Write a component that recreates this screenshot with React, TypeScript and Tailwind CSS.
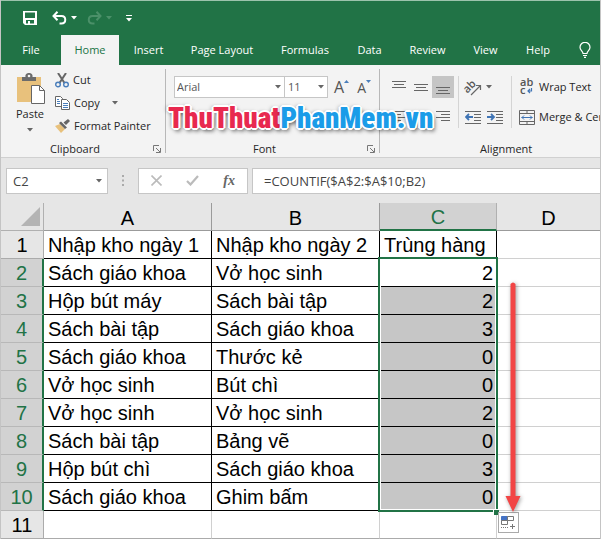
import type { ReactNode } from "react";
import clsx from "clsx";

const tabs = [
  { name: "File", className: "w-[60px]" },
  { name: "Home", className: "w-[58px] bg-[#f3f3f3] text-[#217346]" },
  { name: "Insert", className: "w-[59px]" },
  { name: "Page Layout", className: "w-[88px]" },
  { name: "Formulas", className: "w-[78px]" },
  { name: "Data", className: "w-[51px]" },
  { name: "Review", className: "w-[65px]" },
  { name: "View", className: "w-[51px]" },
  { name: "Help", className: "w-[54px]" },
];

const rows = [
  ["Nhập kho ngày 1", "Nhập kho ngày 2", "Trùng hàng"],
  ["Sách giáo khoa", "Vở học sinh", "2"],
  ["Hộp bút máy", "Sách bài tập", "2"],
  ["Sách bài tập", "Sách giáo khoa", "3"],
  ["Sách giáo khoa", "Thước kẻ", "0"],
  ["Vở học sinh", "Bút chì", "0"],
  ["Vở học sinh", "Vở học sinh", "2"],
  ["Sách bài tập", "Bảng vẽ", "0"],
  ["Hộp bút chì", "Sách giáo khoa", "3"],
  ["Sách giáo khoa", "Ghim bấm", "0"],
  ["", "", ""],
];

const Caret = ({ className = "text-[#666]" }: { className?: string }) => (
  <svg width="6" height="4" viewBox="0 0 6 4" className={clsx("shrink-0", className)}>
    <path d="M0 0h6L3 3.5z" fill="currentColor" />
  </svg>
);

const Launcher = () => (
  <button aria-label="More options" className="absolute right-1 bottom-0">
    <svg width="8" height="8" viewBox="0 0 8 8" fill="none" stroke="#777">
      <path d="M.5 6V.5H6M3 3l4 4M7.5 3v4.5H3" />
    </svg>
  </button>
);

// horizontal rules used by all the alignment icons: [x1, x2, y]
const Lines = ({ lines, children }: { lines: number[][]; children?: ReactNode }) => (
  <svg width="16" height="14" viewBox="0 0 16 14" stroke="#666" fill="none">
    {lines.map(([a, b, y]) => (
      <path key={y} d={`M${a} ${y + 0.5}H${b}`} />
    ))}
    {children}
  </svg>
);

const TitleBar = () => (
  <div className="flex h-[34px] items-center pl-[22px] text-white">
    <button aria-label="Save">
      <svg width="15" height="14" viewBox="0 0 15 14">
        <path
          fill="#fff"
          fillRule="evenodd"
          d="M0 0h14v14H2L0 12zM2 1.5V7h10V1.5zM3 9v3.5h2V10h2v2.5h4V9z"
        />
      </svg>
    </button>
    <button aria-label="Undo" className="ml-[14px]">
      <svg width="15" height="14" viewBox="0 0 15 14" fill="none" stroke="#fff" strokeWidth="2">
        <path d="M5.500.8 1.500 5l4 4.200M2 5h7.500c5 0 5 7.500 0 7.500H7.500" />
      </svg>
    </button>
    <Caret className="ml-1 text-white" />
    <button aria-label="Redo" className="ml-[10px]">
      <svg width="15" height="14" viewBox="0 0 15 14" fill="none" stroke="#4b9069" strokeWidth="2">
        <path d="m9.500.8 4 4.200-4 4.200M13 5H5.500c-5 0-5 7.500 0 7.500h2" />
      </svg>
    </button>
    <Caret className="ml-1 text-[#4b9069]" />
    <button aria-label="Customize toolbar" className="ml-[14px]">
      <svg width="6" height="7" viewBox="0 0 6 7" fill="#fff">
        <path d="M0 0h6v1H0zM0 3h6L3 6.500z" />
      </svg>
    </button>
  </div>
);

const Tabs = () => (
  <nav className="flex h-[30px] text-[11px] text-white">
    {tabs.map((tab) => (
      <button
        key={tab.name}
        className={clsx("shrink-0 whitespace-nowrap", tab.className)}
      >
        {tab.name}
      </button>
    ))}
    <button aria-label="Tell me" className="ml-[14px] shrink-0">
      <svg width="12" height="16" viewBox="0 0 12 16" fill="none" stroke="#fff" strokeWidth="1.200">
        <path d="M4 11.500c0-2.500-3-3-3-6.200a5 5 0 0 1 10 0c0 3.200-3 3.700-3 6.200zM4 13.500h4M5 15.300h2" />
      </svg>
    </button>
  </nav>
);

const Clipboard = () => (
  <section className="relative my-1 w-[165px] shrink-0 border-r border-[#b8b8b8]">
    <div className="flex">
      <button className="ml-3 flex w-[34px] flex-col items-center pt-1">
        <svg width="30" height="32" viewBox="0 0 30 32">
          <path d="M2 4h24v25H2z" fill="#e8c17c" />
          <path
            d="M7 8V4h3.500C10 1 12 0 14 0s4 1 3.500 4H21v4z"
            fill="#6b6b6b"
          />
          <circle cx="14" cy="3" r="1.300" fill="#f3f3f3" />
          <path d="M16.500 12.500h8l5 5v13h-13z" fill="#fff" stroke="#666" />
          <path d="M24.500 12.500v5h5" fill="none" stroke="#666" />
        </svg>
        <span className="mt-px leading-4">Paste</span>
        <Caret className="mt-[6px] text-[#666]" />
      </button>
      <div className="ml-2 flex flex-col">
        <button className="flex h-[22px] items-center gap-1">
          <svg width="14" height="15" viewBox="0 0 14 15" fill="none">
            <path d="m3 0 6.500 10M11 0 4.500 10" stroke="#666" strokeWidth="2" />
            <circle cx="3" cy="11.500" r="2.300" stroke="#4a7ebb" strokeWidth="1.400" />
            <circle cx="11" cy="11.500" r="2.300" stroke="#4a7ebb" strokeWidth="1.400" />
          </svg>
          Cut
        </button>
        <button className="flex h-[24px] items-center gap-1">
          <svg width="15" height="14" viewBox="0 0 15 14" fill="#fff" stroke="#666">
            <path d="M.5.5h5l2 2v8h-7z" />
            <path d="M2 3.500h2M2 5.500h3M2 7.500h3" stroke="#4a7ebb" />
            <path d="M6.500 3.500h5l3 3v7h-8z" />
            <path d="M8 7.500h5M8 9.500h5M8 11.500h5" stroke="#4a7ebb" />
          </svg>
          Copy
          <Caret className="ml-2 text-[#666]" />
        </button>
        <button className="flex h-[22px] items-center gap-1 whitespace-nowrap">
          <svg width="15" height="14" viewBox="0 0 15 14">
            <path d="m0 7 5-2 5 5-4 4z" fill="#e8c17c" />
            <path d="m4 4 2-1.500 6 6L10 10zM8.500 3.500 13 0l2 2-4 4z" fill="#666" />
          </svg>
          Format Painter
        </button>
      </div>
    </div>
    <p className="absolute inset-x-0 -bottom-1 pr-4 text-center leading-4">Clipboard</p>
    <Launcher />
  </section>
);

const FontGroup = () => (
  <section className="relative my-1 w-[214px] shrink-0 border-r border-[#b8b8b8]">
    <div className="flex pt-[7px] pl-2">
      <label className="relative">
        <select
          aria-label="Font"
          className="h-[22px] w-[111px] appearance-none border border-[#c6c6c6] bg-white pl-[2px] text-[#555] outline-none"
        >
          <option>Arial</option>
        </select>
        <Caret className="absolute top-[9px] right-1 text-[#666]" />
      </label>
      <label className="relative">
        <select
          aria-label="Font size"
          className="-ml-px h-[22px] w-[44px] appearance-none border border-[#c6c6c6] bg-white pl-[3px] text-[#555] outline-none"
        >
          <option>11</option>
        </select>
        <Caret className="absolute top-[9px] right-1 text-[#666]" />
      </label>
      <button aria-label="Increase font size" className="ml-[6px] flex items-center text-base leading-none text-[#555]">
        A
        <svg width="5" height="3" viewBox="0 0 5 3" className="mb-3">
          <path d="M0 3h5L2.500 0z" fill="#4a7ebb" />
        </svg>
      </button>
      <button aria-label="Decrease font size" className="ml-2 flex items-center pt-px text-sm leading-none text-[#555]">
        A
        <svg width="5" height="3" viewBox="0 0 5 3" className="mb-3">
          <path d="M0 0h5L2.500 3z" fill="#4a7ebb" />
        </svg>
      </button>
    </div>
    <p className="absolute inset-x-0 -bottom-1 pr-4 text-center leading-4">Font</p>
    <Launcher />
  </section>
);

const iconButton = "flex h-[22px] w-[22px] items-center justify-center";

const Alignment = () => (
  <section className="relative -mb-1 mt-1 min-w-0 flex-1 overflow-hidden">
    <div className="flex pt-[7px] pl-2">
      <div className="grid shrink-0 grid-cols-[22px_22px_22px] gap-y-2">
        <button aria-label="Top align" className={iconButton}>
          <Lines lines={[[1, 15, 1], [3, 13, 4], [1, 15, 7]]} />
        </button>
        <button aria-label="Middle align" className={iconButton}>
          <Lines lines={[[1, 15, 4], [3, 13, 7], [1, 15, 10]]} />
        </button>
        <button aria-label="Bottom align" className={clsx(iconButton, "bg-[#c5c5c5]")}>
          <Lines lines={[[1, 15, 7], [3, 13, 10], [1, 15, 13]]} />
        </button>
        <button aria-label="Align left" className={iconButton}>
          <Lines lines={[[1, 15, 1], [1, 10, 4], [1, 15, 7], [1, 10, 10]]} />
        </button>
        <button aria-label="Center" className={iconButton}>
          <Lines lines={[[1, 15, 1], [4, 12, 4], [1, 15, 7], [4, 12, 10]]} />
        </button>
        <button aria-label="Align right" className={iconButton}>
          <Lines lines={[[1, 15, 1], [6, 15, 4], [1, 15, 7], [6, 15, 10]]} />
        </button>
      </div>
      <div className="ml-1 flex w-[54px] shrink-0 flex-col gap-2 border-x border-[#d4d4d4] pl-[6px]">
        <button aria-label="Orientation" className="flex h-[22px] items-center gap-1">
          <svg width="17" height="17" viewBox="0 0 17 17" className="shrink-0 overflow-visible">
            <text x="-1" y="11" fontSize="11" fontWeight="600" fill="#555" transform="rotate(-45 5 9)">
              ab
            </text>
            <path d="m6 16 9-9M11 6.500h4.500V11" fill="none" stroke="#666" strokeWidth="1.200" />
          </svg>
          <Caret />
        </button>
        <div className="flex h-[22px] items-center gap-[6px]">
          <button aria-label="Decrease indent">
            <Lines lines={[[0, 16, 1], [9, 16, 4], [9, 16, 7], [9, 16, 10], [0, 16, 13]]}>
              <path d="M8 7H1.500M4 4 1 7l3 3" stroke="#3f74b5" strokeWidth="1.800" />
            </Lines>
          </button>
          <button aria-label="Increase indent">
            <Lines lines={[[0, 16, 1], [9, 16, 4], [9, 16, 7], [9, 16, 10], [0, 16, 13]]}>
              <path d="M0 7h6.500M4 4l3 3-3 3" stroke="#3f74b5" strokeWidth="1.800" />
            </Lines>
          </button>
        </div>
      </div>
      <div className="ml-[7px] flex shrink-0 flex-col gap-2 whitespace-nowrap">
        <button className="flex h-[22px] items-center gap-1">
          <svg width="16" height="18" viewBox="0 0 16 18" className="overflow-visible">
            <text x="1" y="8" fontSize="11" fontWeight="600" fill="#555">ab</text>
            <text x="1" y="16" fontSize="11" fontWeight="600" fill="#555">c</text>
            <path d="M12.500 10v3H9M11 11l-2 2 2 2" fill="none" stroke="#3f74b5" strokeWidth="1.200" />
          </svg>
          Wrap Text
        </button>
        <button className="flex h-[22px] items-center gap-1">
          <svg width="16" height="15" viewBox="0 0 16 15" fill="none" stroke="#666">
            <path d="M.5.5h15v14H.5zM.5 3.500h15M.5 11.500h15M8 0v3.500M8 11.500V15" />
            <path d="M2.500 7.500h11M5 5.500l-2 2 2 2M11 5.500l2 2-2 2" stroke="#3f74b5" />
          </svg>
          Merge &amp; Center
        </button>
      </div>
    </div>
    <p className="absolute bottom-1 left-[100px] leading-4">Alignment</p>
  </section>
);

const FormulaBar = () => (
  <div className="flex h-[45px] items-center bg-[#e6e6e6] pl-[5px] text-[13px] text-[#444]">
    <label className="relative flex">
      <input
        aria-label="Name box"
        defaultValue="C2"
        className="h-[26px] w-[102px] border border-[#c6c6c6] bg-white pl-[6px] outline-none"
      />
      <Caret className="absolute top-[11px] right-[6px] text-[#666]" />
    </label>
    <svg width="2" height="11" viewBox="0 0 2 11" fill="#aaa" className="mx-[14px]">
      <path d="M0 0h2v2H0zM0 4.500h2v2H0zM0 9h2v2H0z" />
    </svg>
    <div className="flex h-[26px] w-[110px] items-center justify-around border border-[#c6c6c6] bg-white">
      <button aria-label="Cancel">
        <svg width="11" height="11" viewBox="0 0 11 11" stroke="#bbb" strokeWidth="1.600">
          <path d="m.5.5 10 10M10.500.5l-10 10" />
        </svg>
      </button>
      <button aria-label="Enter">
        <svg width="13" height="11" viewBox="0 0 13 11" fill="none" stroke="#bbb" strokeWidth="2.200">
          <path d="m1 6 3.500 3.500L12 1" />
        </svg>
      </button>
      <button
        aria-label="Insert function"
        className="font-['Liberation_Serif',serif] text-sm font-bold text-[#666] italic"
      >
        fx
      </button>
    </div>
    <input
      aria-label="Formula bar"
      defaultValue="=COUNTIF($A$2:$A$10;B2)"
      className="ml-1 h-[26px] min-w-0 flex-1 border border-r-0 border-[#c6c6c6] bg-white pl-[11px] outline-none"
    />
  </div>
);

// selection frame, fill handle, autofill button and the arrow, all anchored on C2
const Selection = () => (
  <>
    <span className="absolute -top-[2px] -right-[2px] -left-[2px] h-[255px] border-2 border-[#217346] shadow-[inset_0_0_0_1px_white]" />
    <span className="absolute top-[250px] -right-[3px] size-[6px] border-t border-l border-white bg-[#217346]" />
    <button
      aria-label="Auto fill options"
      className="absolute top-[253px] left-[118px] border border-[#aaa] bg-white p-[2px]"
    >
      <svg width="15" height="15" viewBox="0 0 15 15" fill="none" stroke="#777">
        <path d="M.5 1.500h6v4h-6z" fill="#4472c4" stroke="#4472c4" />
        <path d="M6.500 1.500h6v4h-6zM.5 5.500h6v4h-6z" fill="#fff" />
        <path d="M0 12.500h8" strokeDasharray="1 1" />
        <path d="M11.500 9v5M9 11.500h5" />
      </svg>
    </button>
    <svg
      width="22"
      height="232"
      viewBox="0 0 22 232"
      className="absolute top-[22px] left-[122px] drop-shadow-[1px_1px_2px_#0006]"
    >
      <path d="M8.500 3q2.500-3 5 0v212H18.500l-7.500 16-7.500-16h5z" fill="#f24545" />
    </svg>
  </>
);

const Sheet = () => (
  <table className="w-full table-fixed border-separate border-spacing-0 bg-white font-['Liberation_Sans',Arial,sans-serif] text-xl leading-6 text-black">
    <colgroup>
      <col className="w-[43px]" />
      <col className="w-[168px]" />
      <col className="w-[168px]" />
      <col className="w-[117px]" />
      <col />
    </colgroup>
    <thead>
      <tr className="h-7 bg-[#e6e6e6]">
        <td className="border-r border-b border-[#b0b0b0] p-0">
          <svg width="20" height="19" viewBox="0 0 20 19" className="ml-5">
            <path d="M19 0v19H0z" fill="#b4b4b4" />
          </svg>
        </td>
        {["A", "B", "C", "D"].map((col) => (
          <th
            key={col}
            scope="col"
            className={clsx(
              "p-0 pt-[2px] font-normal",
              col === "C"
                ? "border-r border-b-2 border-r-[#b0b0b0] border-b-[#217346] bg-[#d2d2d2] text-[#217346]"
                : "border-b border-[#9b9b9b]",
              col === "A" && "border-r",
              col === "B" && "border-r"
            )}
          >
            {col}
          </th>
        ))}
      </tr>
    </thead>
    <tbody>
      {rows.map((row, index) => {
        const selected = index > 0 && index < 10;
        const last = index === 10;
        const line = last ? "border-[#d0d0d0] border-b-[#ababab]" : "border-black";
        return (
          <tr key={index} className="h-7">
            <th
              scope="row"
              className={clsx(
                "border-b p-0 font-normal",
                selected
                  ? "border-r-2 border-r-[#217346] border-b-[#b8b8b8] bg-[#d2d2d2] text-[#217346]"
                  : "border-r border-[#ababab] bg-[#e6e6e6]"
              )}
            >
              {index + 1}
            </th>
            <td className={clsx("border-r border-b p-0 pl-1", line)}>{row[0]}</td>
            <td className={clsx("border-r border-b p-0 pl-1", line)}>{row[1]}</td>
            <td
              className={clsx(
                "border-r border-b p-0",
                line,
                selected ? "pr-[3px] text-right" : "pl-1",
                index === 1 && "relative z-10",
                selected && index > 1 && "bg-[#c6c6c6]"
              )}
            >
              {row[2]}
              {index === 1 && <Selection />}
            </td>
            <td className={clsx("border-b p-0", last ? "border-[#ababab]" : "border-[#d0d0d0]")} />
          </tr>
        );
      })}
    </tbody>
  </table>
);

export default function App() {
  return (
    <main className="overflow-hidden border-x border-[#c4c4c4] font-['Open_Sans','Noto_Sans',sans-serif]">
      <header className="border-t border-[#9cc3ac] bg-[#217346]">
        <TitleBar />
        <Tabs />
      </header>
      <div className="relative flex h-[93px] border-b border-[#d0d0d0] bg-[#f3f3f3] text-[11px] text-[#262626]">
        <Clipboard />
        <FontGroup />
        <Alignment />
        <p className="absolute top-[37px] left-[167px] font-['Roboto_Condensed','Roboto','Liberation_Sans',sans-serif] text-[29px] leading-8 font-black whitespace-nowrap text-[#1b9ce8] [text-shadow:2px_0_white,-2px_0_white,0_2px_white,0_-2px_white,1px_1px_white,-1px_-1px_white,1px_-1px_white,-1px_1px_white,2px_3px_4px_#000a,-2px_0_4px_#0006]">
          <span className="text-[#e8294f]">ThuThuat</span>PhanMem.vn
        </p>
      </div>
      <FormulaBar />
      <Sheet />
    </main>
  );
}
